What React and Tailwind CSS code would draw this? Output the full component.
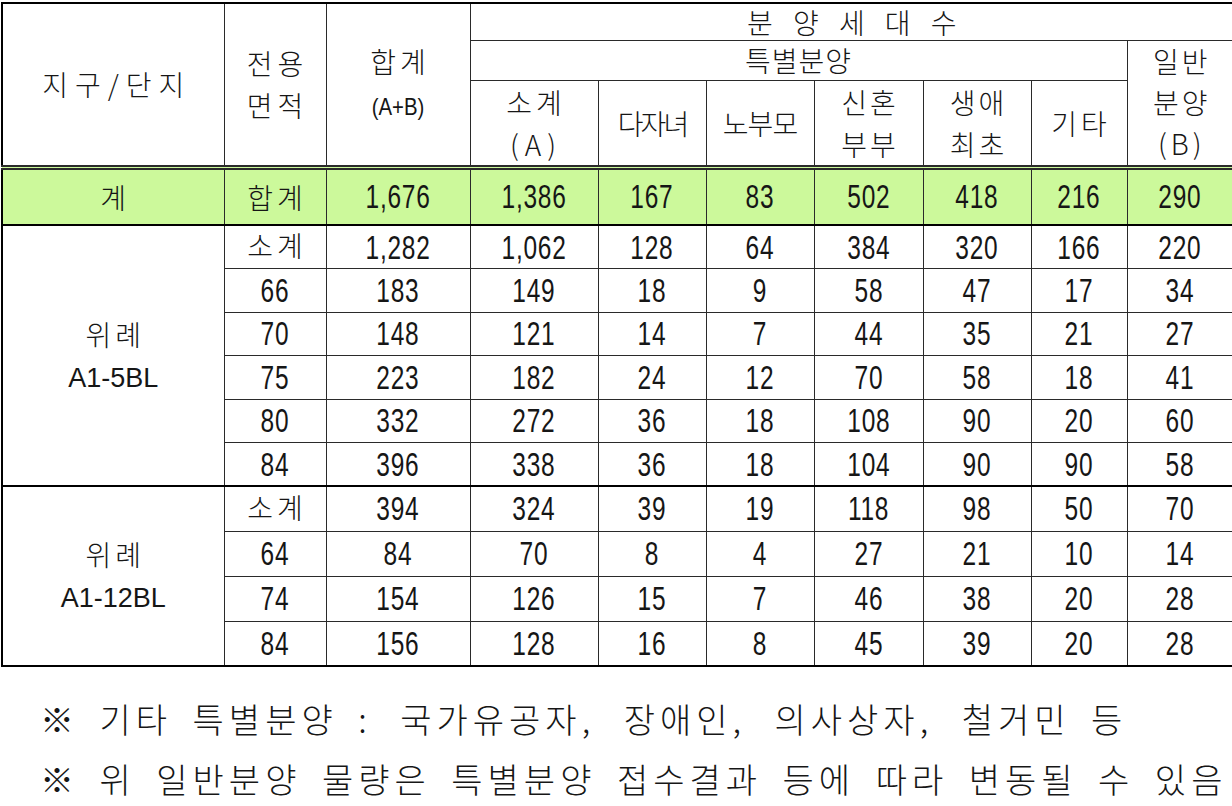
import React from "react";

const ko = "font-['Noto_Sans_CJK_KR','Noto_Sans',sans-serif] font-light";

const section1 = [
  ["소계", "1,282", "1,062", "128", "64", "384", "320", "166", "220"],
  ["66", "183", "149", "18", "9", "58", "47", "17", "34"],
  ["70", "148", "121", "14", "7", "44", "35", "21", "27"],
  ["75", "223", "182", "24", "12", "70", "58", "18", "41"],
  ["80", "332", "272", "36", "18", "108", "90", "20", "60"],
  ["84", "396", "338", "36", "18", "104", "90", "90", "58"],
];

const section2 = [
  ["소계", "394", "324", "39", "19", "118", "98", "50", "70"],
  ["64", "84", "70", "8", "4", "27", "21", "10", "14"],
  ["74", "154", "126", "15", "7", "46", "38", "20", "28"],
  ["84", "156", "128", "16", "8", "45", "39", "20", "28"],
];

const widths = [222, 102, 144, 128, 108, 108, 109, 108, 96, 107];

const cell = "border border-[#2a2a2a] p-0 text-center align-middle";
const headBottom = "border-b-[5px] border-b-[#2a2a2a] border-double";

// narrow digits, like the Gulim numerals of the original
const Num = ({ children }) => (
  <span className="inline-block font-['Liberation_Sans',Arial,sans-serif] text-[34px] leading-none tracking-[1px] scale-x-[0.72]">
    {children}
  </span>
);

const Value = ({ v }) =>
  /[가-힣]/.test(v) ? (
    <span className={`${ko} text-[28px] tracking-[4px] pl-[4px] leading-none`}>{v}</span>
  ) : (
    <Num>{v}</Num>
  );

const Section = ({ name, code, rows, rowH }) =>
  rows.map((r, i) => (
    <tr key={i} className={rowH}>
      {i === 0 && (
        <td
          rowSpan={rows.length}
          className={`${cell} border-t-2 border-t-black ${ko} text-[28px] leading-[44px]`}
        >
          <div className="tracking-[4px] pl-[4px]">{name}</div>
          <div className="font-['Liberation_Sans',Arial,sans-serif] font-normal text-[27px]">
            {code}
          </div>
        </td>
      )}
      {r.map((v, j) => (
        <td
          key={j}
          className={`${cell} ${i === 0 ? "border-t-2 border-t-black" : ""}`}
        >
          <Value v={v} />
        </td>
      ))}
    </tr>
  ));

const P = ({ children }) => <span className="mr-[8px]">{children}</span>;

export default function App() {
  return (
    <div className="w-[1232px] h-[806px] bg-white text-[#161616] overflow-hidden">
      <div className="pt-[2px] pl-[1px]">
        <table className="w-[1230px] table-fixed border-collapse border-2 border-black">
          <colgroup>
            {widths.map((w, i) => (
              <col key={i} style={{ width: w }} />
            ))}
          </colgroup>
          <thead>
            <tr className="h-[37px]">
              <th
                rowSpan={3}
                className={`${cell} ${headBottom} ${ko} text-[28px] tracking-[7px] pl-[7px]`}
              >
                지구/단지
              </th>
              <th
                rowSpan={3}
                className={`${cell} ${headBottom} ${ko} text-[28px] leading-[42px] tracking-[5px] pl-[5px]`}
              >
                <div>전용</div>
                <div>면적</div>
              </th>
              <th rowSpan={3} className={`${cell} ${headBottom} ${ko}`}>
                <div className="text-[28px] leading-[45px] tracking-[4px] pl-[4px]">합계</div>
                <div className="font-['Liberation_Sans',Arial,sans-serif] font-normal text-[24px] leading-[45px]">
                  <span className="inline-block scale-x-[0.85]">(A+B)</span>
                </div>
              </th>
              <th
                colSpan={7}
                className={`${cell} ${ko} text-[28px] leading-none tracking-[7px] pl-[7px]`}
              >
                분 양 세 대 수
              </th>
            </tr>
            <tr className="h-[40px]">
              <th
                colSpan={6}
                className={`${cell} ${ko} text-[28px] leading-none tracking-[1px]`}
              >
                특별분양
              </th>
              <th
                rowSpan={2}
                className={`${cell} ${headBottom} ${ko} text-[28px] leading-[41px] tracking-[3px] pl-[3px]`}
              >
                <div>일반</div>
                <div>분양</div>
                <div className="tracking-[4px]">(B)</div>
              </th>
            </tr>
            <tr className="h-[83px]">
              <th className={`${cell} ${headBottom} ${ko} text-[28px] leading-[42px] tracking-[4px] pl-[4px]`}>
                <div>소계</div>
                <div className="tracking-[6px]">(A)</div>
              </th>
              <th className={`${cell} ${headBottom} ${ko} text-[28px] tracking-[-3px]`}>
                다자녀
              </th>
              <th className={`${cell} ${headBottom} ${ko} text-[28px] tracking-[-1px]`}>
                노부모
              </th>
              <th className={`${cell} ${headBottom} ${ko} text-[28px] leading-[42px] tracking-[3px] pl-[3px]`}>
                <div>신혼</div>
                <div>부부</div>
              </th>
              <th className={`${cell} ${headBottom} ${ko} text-[28px] leading-[42px] tracking-[3px] pl-[3px]`}>
                <div>생애</div>
                <div>최초</div>
              </th>
              <th className={`${cell} ${headBottom} ${ko} text-[28px] tracking-[4px] pl-[4px]`}>
                기타
              </th>
            </tr>
          </thead>
          <tbody>
            <tr className="h-[58px] bg-[#ccf99b]">
              <td className={`${cell} ${ko} text-[28px]`}>계</td>
              <td className={`${cell} ${ko} text-[28px] tracking-[4px] pl-[4px]`}>합계</td>
              {["1,676", "1,386", "167", "83", "502", "418", "216", "290"].map(
                (v, j) => (
                  <td key={j} className={cell}>
                    <Num>{v}</Num>
                  </td>
                )
              )}
            </tr>
            <Section name="위례" code="A1-5BL" rows={section1} rowH="h-[43.5px]" />
            <Section name="위례" code="A1-12BL" rows={section2} rowH="h-[45px]" />
          </tbody>
        </table>
      </div>

      <div className={`${ko} text-[34px] leading-[60px] whitespace-nowrap pl-[40px] pt-[22px] tracking-[5px] [word-spacing:8px]`}>
        <div>
          ※ 기타 특별분양 <P>:</P> 국가유공자<P>,</P> 장애인<P>,</P> 의사상자<P>,</P> 철거민 등
        </div>
        <div>※ 위 일반분양 물량은 특별분양 접수결과 등에 따라 변동될 수 있음</div>
      </div>
    </div>
  );
}
